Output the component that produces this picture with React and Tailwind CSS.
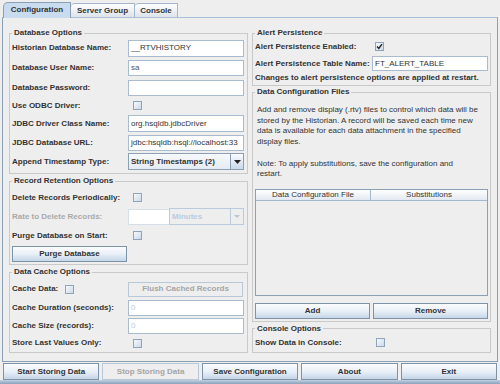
import React from "react";

const FONT = { fontFamily: '"Liberation Sans", Arial, sans-serif' };

function Check({ checked, className = "" }) {
  return (
    <div className={"w-[9px] h-[9px] border border-[#8fa3b9] bg-gradient-to-br from-[#f7f9fc] to-[#ccd9e8] flex items-center justify-center " + className}>
      {checked && (
        <svg width="7" height="7" viewBox="0 0 7 7">
          <path d="M1 3.5 L2.8 5.5 L6 1.2" fill="none" stroke="#222" strokeWidth="1.4" />
        </svg>
      )}
    </div>
  );
}

function Field({ children, className = "", disabled }) {
  return (
    <div
      className={
        "bg-white border border-[#a8bbcf] px-[2px] flex items-center whitespace-nowrap overflow-hidden font-normal " +
        (disabled ? "text-[#b8cbe0] " : "text-[#333] ") +
        className
      }
    >
      {children}
    </div>
  );
}

function Btn({ children, className = "", disabled }) {
  return (
    <div
      className={
        "flex items-center justify-center font-bold border " +
        (disabled
          ? "border-[#b8c8d8] bg-[#eeeeee] text-[#a5a5a5] "
          : "border-[#7f93a8] bg-gradient-to-b from-[#fbfcfe] via-[#e9f0f7] to-[#c5d6e8] text-[#333] ") +
        className
      }
    >
      {children}
    </div>
  );
}

function Row({ label, children, h = "h-[19px]", lw = "w-[116px]", disabled }) {
  return (
    <div className={"flex items-center " + h}>
      <span className={"shrink-0 font-bold whitespace-nowrap " + lw + (disabled ? " text-[#a9a9a9]" : " text-[#333]")}>
        {label}
      </span>
      {children}
    </div>
  );
}

function Group({ title, children, className = "" }) {
  return (
    <fieldset className={"min-w-0 border border-[#c9c9c9] px-[2px] " + className}>
      <legend className="px-[2px] font-bold text-[#333] leading-[10px]">{title}</legend>
      {children}
    </fieldset>
  );
}

export default function App() {
  return (
    <div
      className="w-[500px] h-[384px] bg-[#eeeeee] flex flex-col text-[8px] text-[#333] overflow-hidden"
      style={FONT}
    >
      {/* Tabs */}
      <div className="h-[17px] flex items-end pl-[3px] shrink-0">
        <div className="relative z-10 h-[16px] w-[68px] mb-[-1px] border border-b-0 border-[#8ca0b5] rounded-tl-[5px] bg-[#c8dbef] flex items-center justify-center font-bold pb-[1px]">
          Configuration
        </div>
        <div className="h-[14px] w-[64px] border border-l-0 border-b-0 border-[#a5b7ca] rounded-tl-[4px] bg-gradient-to-b from-[#ffffff] to-[#dde3ea] flex items-center justify-center font-bold">
          Server Group
        </div>
        <div className="h-[14px] w-[43px] border border-l-0 border-b-0 border-[#a5b7ca] rounded-tl-[4px] bg-gradient-to-b from-[#ffffff] to-[#dde3ea] flex items-center justify-center font-bold">
          Console
        </div>
      </div>

      {/* Content panel */}
      <div className="ml-[2px] w-[496px] h-[345px] shrink-0 border border-[#8ca0b5] border-t-[#a9c0d8] px-[6px] pt-[10px] flex gap-[4px]">
        {/* Left column */}
        <div className="w-[240px] flex flex-col gap-[2px]">
          <Group title="Database Options" className="pb-[2px]">
            <Row label="Historian Database Name:" h="h-[20px]">
              <Field className="w-[116px] h-[17px]">__RTVHISTORY</Field>
            </Row>
            <Row label="Database User Name:" h="h-[20px]">
              <Field className="w-[116px] h-[16px] text-[#555]">sa</Field>
            </Row>
            <Row label="Database Password:" h="h-[19px]">
              <Field className="w-[116px] h-[16px]"></Field>
            </Row>
            <Row label="Use ODBC Driver:" h="h-[17px]">
              <Check className="ml-[5px]" />
            </Row>
            <Row label="JDBC Driver Class Name:">
              <Field className="w-[116px] h-[17px]">org.hsqldb.jdbcDriver</Field>
            </Row>
            <Row label="JDBC Database URL:">
              <Field className="w-[116px] h-[16px]">jdbc:hsqldb:hsql://localhost:33</Field>
            </Row>
            <Row label="Append Timestamp Type:">
              <div className="w-[116px] h-[17px] flex border border-[#8ca0b5] bg-gradient-to-b from-[#f7f9fc] to-[#e4ebf3]">
                <div className="flex-1 flex items-center pl-[2px] font-bold whitespace-nowrap">String Timestamps (2)</div>
                <div className="w-[13px] border-l border-[#8ca0b5] bg-gradient-to-b from-[#fbfcfe] to-[#c8d8ea] flex items-center justify-center">
                  <svg width="7" height="4" viewBox="0 0 7 4"><path d="M0 0 H7 L3.5 4 Z" fill="#222" /></svg>
                </div>
              </div>
            </Row>
          </Group>

          <Group title="Record Retention Options" className="pt-[2px] pb-[1px]">
            <Row label="Delete Records Periodically:">
              <Check className="ml-[5px]" />
            </Row>
            <Row label="Rate to Delete Records:" disabled>
              <div className="w-[41px] h-[16px] bg-white border border-r-0 border-[#d5dfe9]"></div>
              <div className="w-[75px] h-[17px] flex border border-[#b9cbdd] bg-[#eeeeee]">
                <div className="w-[61px] flex items-center pl-[2px] border-r border-[#b9cbdd] text-[#b8cbe0] font-bold">Minutes</div>
                <div className="flex-1 flex items-center justify-center">
                  <svg width="6" height="3" viewBox="0 0 6 3"><path d="M0 0 H6 L3 3 Z" fill="#b8c6d4" /></svg>
                </div>
              </div>
            </Row>
            <Row label="Purge Database on Start:">
              <Check className="ml-[5px]" />
            </Row>
            <div className="h-[18px] flex items-center">
              <Btn className="w-[115px] h-[16px]">Purge Database</Btn>
            </div>
          </Group>

          <Group title="Data Cache Options" className="pt-[3px]">
            <div className="h-[18px] flex items-center">
              <span className="font-bold w-[53px] shrink-0">Cache Data:</span>
              <Check />
              <div className="w-[54px]" />
              <Btn disabled className="w-[115px] h-[15px]">Flush Cached Records</Btn>
            </div>
            <Row label="Cache Duration (seconds):">
              <Field disabled className="w-[116px] h-[16px]">0</Field>
            </Row>
            <Row label="Cache Size (records):" h="h-[17px]">
              <Field disabled className="w-[116px] h-[16px]">0</Field>
            </Row>
            <Row label="Store Last Values Only:" h="h-[18px]">
              <Check className="ml-[5px]" />
            </Row>
          </Group>
        </div>

        {/* Right column */}
        <div className="w-[240px] flex flex-col gap-[1px]">
          <Group title="Alert Persistence" className="pb-[1px]">
            <Row label="Alert Persistence Enabled:" h="h-[17px]" lw="w-[120px]">
              <Check checked />
            </Row>
            <Row label="Alert Persistence Table Name:" h="h-[17px]" lw="w-[117px]">
              <Field className="w-[116px] h-[15px]">FT_ALERT_TABLE</Field>
            </Row>
            <div className="h-[12px] flex items-center font-bold whitespace-nowrap">
              Changes to alert persistence options are applied at restart.
            </div>
          </Group>

          <Group title="Data Configuration Files" className="pb-[2px]">
            <div className="pt-[8px] pl-[2px] leading-[10.7px] whitespace-nowrap text-[#333]">
              Add and remove display (.rtv) files to control which data will be
              <br />
              stored by the Historian. A record will be saved each time new
              <br />
              data is available for each data attachment in the specified
              <br />
              display files.
              <br />
              <br />
              Note: To apply substitutions, save the configuration and
              <br />
              restart.
            </div>
            <div className="mt-[9px] w-[233px] h-[107px] border border-[#8ca0b5] flex flex-col">
              <div className="h-[11px] flex border-b border-[#a5b7ca] bg-gradient-to-b from-[#ffffff] to-[#e2e9f1]">
                <div className="w-[115px] border-r border-[#a5b7ca] flex items-center justify-center">Data Configuration File</div>
                <div className="flex-1 flex items-center justify-center">Substitutions</div>
              </div>
              <div className="flex-1 bg-[#eeeeee]" />
            </div>
            <div className="mt-[7px] flex gap-[3px] w-[233px]">
              <Btn className="w-[115px] h-[16px]">Add</Btn>
              <Btn className="w-[115px] h-[16px]">Remove</Btn>
            </div>
          </Group>

          <Group title="Console Options" className="mt-[1px]">
            <Row label="Show Data in Console:" h="h-[18px]" lw="w-[121px]">
              <Check />
            </Row>
          </Group>
        </div>
      </div>

      {/* Bottom buttons */}
      <div className="h-[18px] pt-[1px] px-[3px] flex gap-[3px] shrink-0">
        <Btn className="flex-1 h-[17px]">Start Storing Data</Btn>
        <Btn disabled className="flex-1 h-[17px]">Stop Storing Data</Btn>
        <Btn className="flex-1 h-[17px]">Save Configuration</Btn>
        <Btn className="flex-1 h-[17px]">About</Btn>
        <Btn className="flex-1 h-[17px]">Exit</Btn>
      </div>
      <div className="flex-1 bg-gradient-to-b from-[#c3d2e2] to-[#8aa0ba]" />
    </div>
  );
}
